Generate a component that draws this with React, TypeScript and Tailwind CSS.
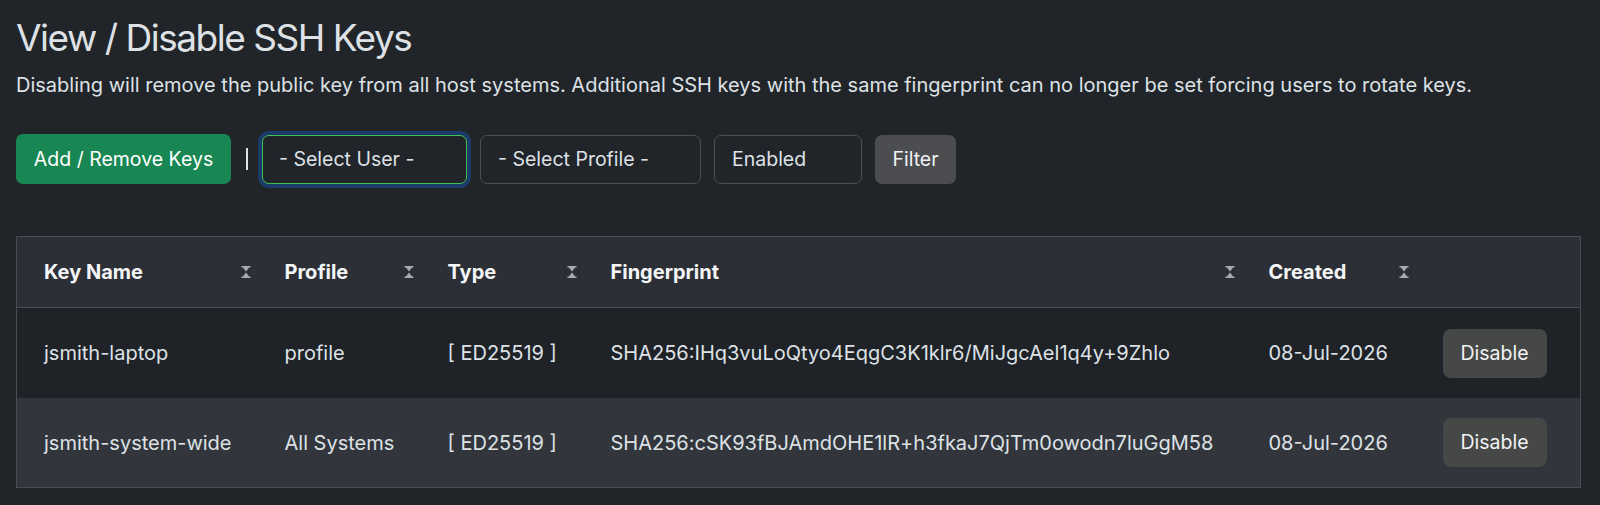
import React from "react";

function SortIcon() {
  return (
    <svg width="10" height="12" viewBox="0 0 10 12" className="shrink-0">
      <path d="M0.5 0h9v1.6H8L5 5.6 2 1.6H0.5z M0.5 12h9v-1.6H8L5 6.4 2 10.4H0.5z" fill="#a7abb0" />
    </svg>
  );
}

const rows = [
  {
    name: "jsmith-laptop",
    profile: "profile",
    type: "[ ED25519 ]",
    fp: "SHA256:IHq3vuLoQtyo4EqgC3K1klr6/MiJgcAel1q4y+9Zhlo",
    created: "08-Jul-2026",
    bg: "bg-[#1f2226]",
  },
  {
    name: "jsmith-system-wide",
    profile: "All Systems",
    type: "[ ED25519 ]",
    fp: "SHA256:cSK93fBJAmdOHE1lR+h3fkaJ7QjTm0owodn7luGgM58",
    created: "08-Jul-2026",
    bg: "bg-[#32363c]",
  },
];

const headers = ["Key Name", "Profile", "Type", "Fingerprint", "Created"];

export default function App() {
  return (
    <div
      className="min-h-[505px] w-[1600px] bg-[#212529] px-4 text-[#dee2e6]"
      style={{ fontFamily: 'Inter, "Liberation Sans", Arial, sans-serif' }}
    >
      <h2 className="pt-[16px] text-[37px] font-normal leading-[1.2] tracking-[-0.04em] text-[#dee2e6]">
        View / Disable SSH Keys
      </h2>
      <p className="mt-[10px] text-[20px] leading-[1.5]">
        Disabling will remove the public key from all host systems. Additional SSH keys with the same fingerprint can no longer be set forcing users to rotate keys.
      </p>

      <div className="mt-[34px] flex items-center">
        <button className="h-[50px] w-[215px] rounded-[7px] bg-[#198754] text-[19.5px] text-white">
          Add / Remove Keys
        </button>
        <span className="ml-[15px] h-[22px] w-[2px] bg-[#dee2e6]" />
        <div className="ml-[14px] flex h-[49px] w-[205px] items-center rounded-[7px] border-[1.5px] border-[#3fc24f] bg-[#212529] pl-[16px] text-[19.5px] shadow-[0_0_0_4px_#1b3b69]">
          - Select User -
        </div>
        <div className="ml-[13px] flex h-[49px] w-[221px] items-center rounded-[7px] border border-[#4b4f55] bg-[#212529] pl-[17px] text-[19.5px]">
          - Select Profile -
        </div>
        <div className="ml-[13px] flex h-[49px] w-[148px] items-center rounded-[7px] border border-[#4b4f55] bg-[#212529] pl-[17px] text-[19.5px]">
          Enabled
        </div>
        <button className="ml-[13px] h-[49px] w-[81px] rounded-[7px] bg-[#4b4d50] text-[19.5px] text-[#f1f3f5]">
          Filter
        </button>
      </div>

      <table className="mt-[52px] w-[1564px] table-fixed border-collapse border border-[#4a4e54] text-[20px]">
        <colgroup>
          <col className="w-[241px]" />
          <col className="w-[163px]" />
          <col className="w-[163px]" />
          <col className="w-[658px]" />
          <col className="w-[174px]" />
          <col className="w-[165px]" />
        </colgroup>
        <thead>
          <tr className="h-[71px] border-b border-[#4a4e54] bg-[#2c3036]">
            {headers.map((h) => (
              <th key={h} className="pl-[27px] pr-[7px] text-left font-bold text-[#f4f5f6]">
                <div className="flex items-center justify-between">
                  <span>{h}</span>
                  <SortIcon />
                </div>
              </th>
            ))}
            <th />
          </tr>
        </thead>
        <tbody>
          {rows.map((r) => (
            <tr key={r.name} className={`h-[90px] ${r.bg}`}>
              <td className="pl-[27px] whitespace-nowrap">{r.name}</td>
              <td className="pl-[27px] whitespace-nowrap">{r.profile}</td>
              <td className="pl-[27px] whitespace-nowrap">{r.type}</td>
              <td className="pl-[27px] whitespace-nowrap">{r.fp}</td>
              <td className="pl-[27px] whitespace-nowrap">{r.created}</td>
              <td className="pl-[27px]">
                <button className="h-[49px] w-[104px] rounded-[8px] bg-[#464847] text-[19.5px] text-[#f1f3f5]">
                  Disable
                </button>
              </td>
            </tr>
          ))}
        </tbody>
      </table>
    </div>
  );
}
